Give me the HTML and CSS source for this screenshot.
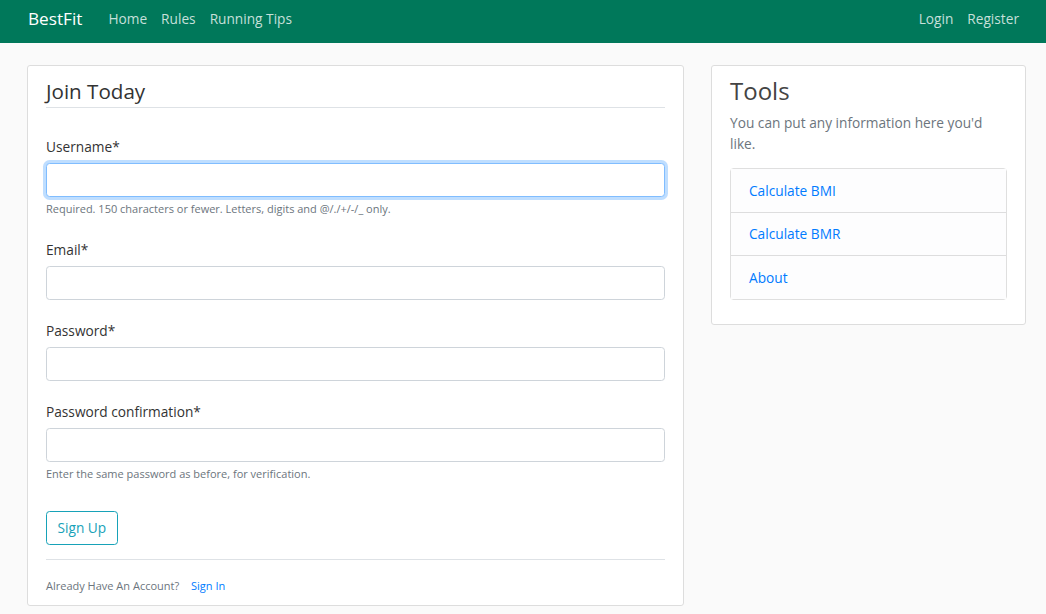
FILE: index.html
```html
<!DOCTYPE html>
<html lang="en">
<head>
<meta charset="utf-8">
<title>BestFit - Register</title>
<link rel="stylesheet" href="styles.css">
</head>
<body>
<header class="navbar">
  <div class="nav-left">
    <a class="brand" href="#">BestFit</a>
    <nav class="nav-links">
      <a href="#">Home</a>
      <a href="#">Rules</a>
      <a href="#">Running Tips</a>
    </nav>
  </div>
  <nav class="nav-links">
    <a href="#">Login</a>
    <a href="#">Register</a>
  </nav>
</header>
<main class="page">
  <section class="content-section main-card">
    <form class="signup-form">
      <fieldset class="fields">
        <legend class="legend">Join Today</legend>
        <div class="form-group">
          <label class="label" for="username">Username*</label>
          <input class="input focused" id="username" type="text">
          <small class="help">Required. 150 characters or fewer. Letters, digits and @/./+/-/_ only.</small>
        </div>
        <div class="form-group">
          <label class="label" for="email">Email*</label>
          <input class="input" id="email" type="email">
        </div>
        <div class="form-group">
          <label class="label" for="password1">Password*</label>
          <input class="input" id="password1" type="password">
        </div>
        <div class="form-group">
          <label class="label" for="password2">Password confirmation*</label>
          <input class="input" id="password2" type="password">
          <small class="help">Enter the same password as before, for verification.</small>
        </div>
      </fieldset>
      <div class="button-group">
        <button class="btn-outline" type="button">Sign Up</button>
      </div>
    </form>
    <div class="footer-note">
      <small class="muted">Already Have An Account? <a class="signin" href="#">Sign In</a></small>
    </div>
  </section>
  <aside class="content-section side-card">
    <h3 class="side-title">Tools</h3>
    <p class="side-text">You can put any information here you'd like.</p>
    <ul class="list-group">
      <li class="list-item"><a href="#">Calculate BMI</a></li>
      <li class="list-item"><a href="#">Calculate BMR</a></li>
      <li class="list-item"><a href="#">About</a></li>
    </ul>
  </aside>
</main>
</body>
</html>
```
FILE: styles.css
```css
* { box-sizing: border-box; }
html, body { margin: 0; padding: 0; }
body {
  background: #fafafa;
  color: #333333;
  font-family: "Open Sans", "Noto Sans", "Liberation Sans", sans-serif;
  font-size: 13.7px;
  line-height: 1.5;
}
a { text-decoration: none; }

.navbar {
  height: 43px;
  background: #00785a;
  display: flex;
  align-items: center;
  justify-content: space-between;
  padding: 0 27px 5px 28px;
}
.nav-left { display: flex; align-items: center; }
.brand {
  color: #ffffff;
  font-size: 17.2px;
  margin-right: 26px;
  line-height: 1;
}
.nav-links { display: flex; gap: 14px; }
.nav-links a {
  color: rgba(255,255,255,0.78);
  font-size: 13.7px;
}

.page {
  display: flex;
  align-items: flex-start;
  gap: 27px;
  padding: 22px 20px 0 27px;
}
.content-section {
  background: #ffffff;
  border: 1px solid #dddddd;
  border-radius: 3px;
  padding: 10px 18px;
}
.main-card { width: 657px; flex: none; padding-bottom: 11px; }
.side-card { flex: 1; }

.signup-form { margin: 0; }
.fields { border: 0; margin: 0; padding: 0; min-width: 0; }
.legend {
  display: block;
  width: 100%;
  padding: 0;
  font-size: 20.6px;
  line-height: 31px;
  color: #333333;
  border-bottom: 1px solid #dee2e6;
  margin-bottom: 28px;
}
.form-group { margin-bottom: 20px; display: flex; flex-direction: column; }
.label {
  display: block;
  line-height: 22px;
  margin-bottom: 5px;
  color: #333333;
}
.input {
  display: block;
  width: 100%;
  height: 34px;
  border: 1px solid #ced4da;
  border-radius: 3.6px;
  background: #ffffff;
  font: inherit;
  padding: 5px 11px;
}
.input.focused {
  border-color: #80bdff;
  box-shadow: 0 0 0 3px rgba(0,123,255,0.25);
  outline: none;
}
.help {
  display: block;
  margin-top: 3px;
  margin-bottom: 1.5px;
  font-size: 11px;
  line-height: 17px;
  color: #6c757d;
}
.button-group { margin-top: 7.5px; margin-bottom: 14px; }
.btn-outline {
  font: inherit;
  color: #17a2b8;
  background: transparent;
  border: 1px solid #17a2b8;
  border-radius: 3.6px;
  height: 34px;
  padding: 0 10.5px;
  line-height: 1;
}
.footer-note {
  border-top: 1px solid #dee2e6;
  padding-top: 17px;
}
.muted {
  font-size: 11px;
  line-height: 17px;
  color: #6c757d;
  display: block;
}
.signin { color: #007bff; margin-left: 9px; }

.side-title {
  margin: 0 0 6px;
  font-size: 24px;
  font-weight: 500;
  line-height: 30px;
  color: #444444;
}
.side-text {
  margin: 0 0 14px;
  color: #6c757d;
  line-height: 21px;
}
.list-group {
  list-style: none;
  margin: 0 0 14px;
  padding: 0;
  border: 1px solid rgba(0,0,0,0.125);
  border-radius: 3.6px;
}
.list-item {
  background: #fdfdfe;
  padding: 10.75px 18px;
  line-height: 21px;
}
.list-item + .list-item { border-top: 1px solid rgba(0,0,0,0.125); }
.list-item a { color: #007bff; }
```
